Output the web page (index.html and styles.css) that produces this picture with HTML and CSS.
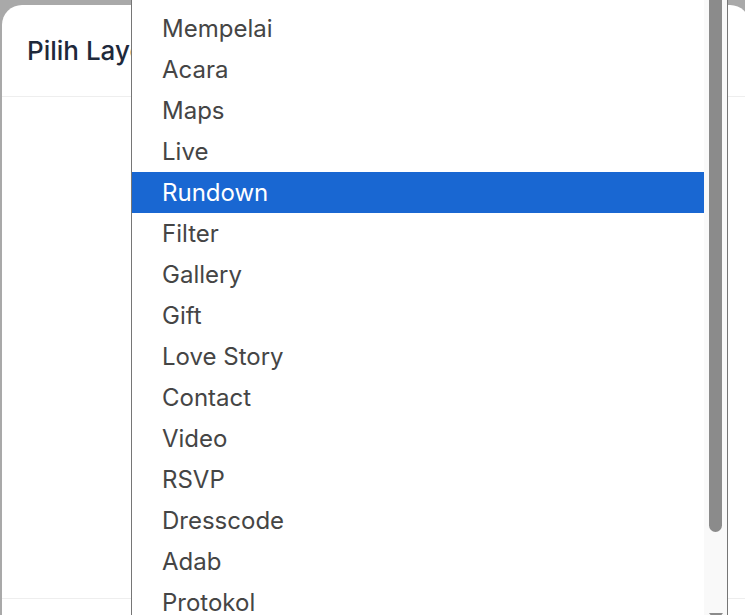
FILE: index.html
```html
<!DOCTYPE html>
<html lang="en">
<head>
  <meta charset="UTF-8">
  <meta name="viewport" content="width=device-width, initial-scale=1.0">
  <link rel="stylesheet" href="styles.css">
</head>
<body>
  <div class="modal">
    <div class="modal-header">Pilih Layout</div>
    <div class="modal-body"></div>
    <div class="modal-footer"></div>

    <div class="listbox">
      <ul class="options">
        <li>Mempelai</li>
        <li>Acara</li>
        <li>Maps</li>
        <li>Live</li>
        <li class="selected">Rundown</li>
        <li>Filter</li>
        <li>Gallery</li>
        <li>Gift</li>
        <li>Love Story</li>
        <li>Contact</li>
        <li>Video</li>
        <li>RSVP</li>
        <li>Dresscode</li>
        <li>Adab</li>
        <li>Protokol</li>
      </ul>
      <div class="scrollbar">
        <div class="thumb"></div>
        <div class="arrow-down"></div>
      </div>
    </div>
  </div>
</body>
</html>
```

FILE: styles.css
```css
body {
  margin: 0;
  background-color: #a9a9a9;
  font-family: Inter, "Noto Sans", sans-serif;
  overflow: hidden;
  height: 615px;
}
.modal {
  position: relative;
  margin: 5px 0 0 2px;
  width: 748px;
  height: 700px;
  background-color: #ffffff;
  border-radius: 20px;
}
.modal-header {
  height: 91px;
  padding-left: 25px;
  display: flex;
  align-items: center;
  font-size: 26px;
  font-weight: 500;
  color: #1e293b;
  border-bottom: 1px solid #eeeeee;
  white-space: nowrap;
}
.modal-body {
  height: 501px;
}
.modal-footer {
  border-top: 1px solid #eeeeee;
  height: 100px;
}
.listbox {
  position: absolute;
  left: 129px;
  top: -38px;
  width: 595px;
  height: 660px;
  border: 1px solid #767676;
  background-color: #ffffff;
  display: flex;
  overflow: hidden;
}
.options {
  list-style: none;
  margin: 0;
  padding: 40px 0 0;
  flex: 1;
}
.options li {
  height: 41px;
  line-height: 41px;
  padding-left: 30px;
  font-size: 24px;
  color: #454545;
}
.options li.selected {
  background-color: #1967d2;
  color: #ffffff;
}
.scrollbar {
  width: 23px;
  background-color: #f9f9f9;
  position: relative;
}
.thumb {
  position: absolute;
  left: 5px;
  top: 0;
  width: 13px;
  height: 564px;
  background-color: #8b8b8b;
  border-radius: 0 0 7px 7px;
}
.arrow-down {
  position: absolute;
  left: 5px;
  top: 645px;
  width: 0;
  height: 0;
  border-left: 7px solid transparent;
  border-right: 7px solid transparent;
  border-top: 9px solid #8b8b8b;
}
```
